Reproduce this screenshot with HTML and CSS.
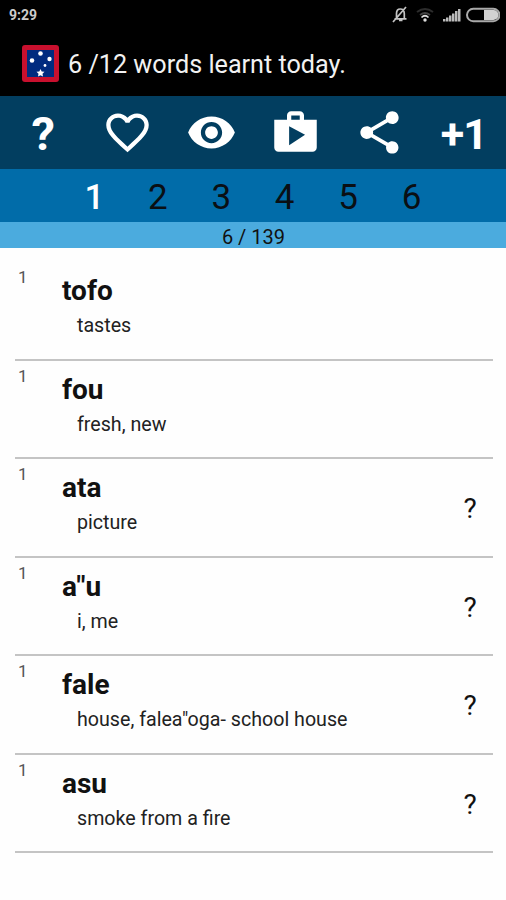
FILE: index.html
```
<!DOCTYPE html>
<html lang="en">

<head>
    <meta charset="UTF-8">
    <title>Samoan Words</title>
    <link rel="stylesheet" href="styles.css">
</head>

<body>

    <div class="status">
        <span class="time">9:29</span>
        <svg class="status-icons" width="108" height="18" viewBox="0 0 108 18">
            <!-- muted bell -->
            <path d="M2.500 12.800h12M4.500 12V7.500Q4.500 3 8.300 3T12.300 7.500V12M7 14.500h3.500M1 16L14 1" fill="none" stroke="#c4c4c4" stroke-width="1.700" />
            <!-- wifi -->
            <path d="M25 6Q33 0 41 6" fill="none" stroke="#2c2c2c" stroke-width="2" />
            <path d="M28 9Q33 5 38 9" fill="none" stroke="#444" stroke-width="1.700" />
            <path d="M29.500 11.500Q33 8 36.500 11.500" fill="none" stroke="#ddd" stroke-width="1.700" />
            <circle cx="33" cy="14" r="1.700" fill="#ddd" />
            <!-- signal -->
            <path d="M51 13h2.500v2.500H51zM54 11.500h2.500v4H54zM57 9.500h2.500v6H57zM60 7.500h2.500v8H60zM63 5h2.500v10.500H63zM66 3h2.500v12.500H66z" fill="#bbb" />
            <!-- battery -->
            <rect x="75" y="2.800" width="32.500" height="12.400" rx="6.200" fill="#000" stroke="#aaa" stroke-width="2" />
            <path d="M92 4h9.500a5 5 0 0 1 0 10H92z" fill="#d2d2d2" />
        </svg>
    </div>

    <header>
        <svg class="logo" width="37" height="37" viewBox="0 0 37 37">
            <rect width="37" height="37" rx="3" fill="#c8102e" />
            <rect x="5" y="5" width="27" height="27" fill="#002b7f" />
            <g fill="#fff">
                <circle cx="18.500" cy="8.500" r="2.300" />
                <circle cx="10" cy="15.500" r="2.300" />
                <circle cx="27.500" cy="14" r="2.200" />
                <circle cx="23" cy="20.500" r="1.400" />
                <path d="M18.500 24l1.200 2.500 2.800.2-2 2 .5 2.800-2.500-1.300-2.500 1.300.5-2.800-2-2 2.800-.2z" />
            </g>
        </svg>
        <h1>6 /12 words learnt today.</h1>
    </header>

    <nav class="toolbar">
        <span class="help">?</span>
        <svg viewBox="0 0 24 24"><path d="M16.500 3c-1.740 0-3.410.81-4.500 2.090C10.910 3.810 9.240 3 7.500 3 4.420 3 2 5.420 2 8.500c0 3.780 3.400 6.860 8.550 11.540L12 21.350l1.450-1.320C18.600 15.360 22 12.280 22 8.500 22 5.420 19.580 3 16.500 3zm-4.400 15.550l-.1.1-.1-.1C7.140 14.240 4 11.390 4 8.500 4 6.500 5.500 5 7.500 5c1.540 0 3.040.99 3.570 2.360h1.870C13.460 5.990 14.960 5 16.500 5c2 0 3.500 1.500 3.500 3.500 0 2.890-3.140 5.740-7.900 10.050z" /></svg>
        <svg viewBox="0 0 24 24"><path d="M12 4.500C7 4.500 2.730 7.610 1 12c1.730 4.390 6 7.500 11 7.500s9.270-3.110 11-7.500c-1.730-4.390-6-7.500-11-7.500zM12 17c-2.760 0-5-2.240-5-5s2.240-5 5-5 5 2.240 5 5-2.240 5-5 5zm0-8c-1.660 0-3 1.340-3 3s1.340 3 3 3 3-1.340 3-3-1.340-3-3-3z" /></svg>
        <svg viewBox="0 0 24 24"><path d="M16 6V4c0-1.110-.89-2-2-2h-4c-1.110 0-2 .89-2 2v2H2v13c0 1.110.89 2 2 2h16c1.110 0 2-.89 2-2V6h-6zm-6-2h4v2h-4V4zM9 18V9l7.500 4L9 18z" /></svg>
        <svg viewBox="0 0 24 24"><path d="M18 16.080c-.76 0-1.440.3-1.960.77L8.910 12.700c.05-.23.09-.46.09-.7s-.04-.47-.09-.7l7.050-4.110c.54.5 1.250.81 2.040.81 1.660 0 3-1.340 3-3s-1.340-3-3-3-3 1.340-3 3c0 .24.04.47.09.7L8.040 9.810C7.500 9.310 6.790 9 6 9c-1.660 0-3 1.340-3 3s1.340 3 3 3c.79 0 1.500-.31 2.040-.81l7.120 4.160c-.05.21-.08.43-.08.65 0 1.610 1.310 2.920 2.920 2.920s2.920-1.310 2.920-2.920-1.310-2.920-2.920-2.920z" /></svg>
        <span class="plus">+1</span>
    </nav>

    <nav class="levels">
        <span class="active">1</span>
        <span>2</span>
        <span>3</span>
        <span>4</span>
        <span>5</span>
        <span>6</span>
    </nav>

    <div class="progress">6 / 139</div>

    <ul class="words">
        <li>
            <span class="level">1</span>
            <div class="entry"><h2>tofo</h2><p>tastes</p></div>
        </li>
        <li>
            <span class="level">1</span>
            <div class="entry"><h2>fou</h2><p>fresh, new</p></div>
        </li>
        <li>
            <span class="level">1</span>
            <div class="entry"><h2>ata</h2><p>picture</p></div>
            <span class="unknown">?</span>
        </li>
        <li>
            <span class="level">1</span>
            <div class="entry"><h2>a"u</h2><p>i, me</p></div>
            <span class="unknown">?</span>
        </li>
        <li>
            <span class="level">1</span>
            <div class="entry"><h2>fale</h2><p>house, falea"oga- school house</p></div>
            <span class="unknown">?</span>
        </li>
        <li>
            <span class="level">1</span>
            <div class="entry"><h2>asu</h2><p>smoke from a fire</p></div>
            <span class="unknown">?</span>
        </li>
    </ul>

</body>

</html>
```
FILE: styles.css
```
* {
    box-sizing: border-box;
}

body {
    margin: 0;
    font-family: Roboto, sans-serif;
    background-color: #fefefe;
    color: #111;
}

.status {
    display: flex;
    justify-content: space-between;
    align-items: center;
    height: 30px;
    padding: 0 6px 0 9px;
    background-color: #000;
    color: #ccc;
}

.time {
    font-size: 14px;
    font-weight: bold;
}

header {
    display: flex;
    align-items: center;
    gap: 9px;
    height: 66px;
    padding: 0 22px;
    background-color: #000;
    color: #f2f2f2;
}

h1 {
    margin: 2px 0 0;
    font-size: 25.200px;
    font-weight: normal;
}

.toolbar {
    display: grid;
    grid-template-columns: repeat(6, 1fr);
    align-items: center;
    justify-items: center;
    height: 73px;
    padding-left: 1px;
    background-color: #023e60;
    color: #fff;
    font-weight: bold;
}

.toolbar svg {
    width: 51px;
    height: 51px;
    fill: #fff;
}

.help {
    padding-top: 2px;
    font-size: 47px;
}

.plus {
    padding-top: 3px;
    font-size: 43px;
    letter-spacing: -1px;
}

.levels {
    display: grid;
    grid-template-columns: repeat(6, 63.400px);
    justify-content: center;
    height: 53px;
    background-color: #016ca9;
    color: #0a0f14;
    font-size: 35px;
    line-height: 58px;
    text-align: center;
}

.levels .active {
    color: #fff;
    font-weight: 500;
}

.progress {
    height: 26px;
    padding-left: 1px;
    background-color: #4babde;
    font-size: 20px;
    line-height: 31px;
    text-align: center;
}

.words {
    margin: 0;
    padding: 14px 13px 0 15px;
    list-style: none;
}

.words li {
    display: flex;
    height: 98.500px;
    border-bottom: 2px solid #c4c4c4;
}

.level {
    width: 47px;
    padding: 5px 0 0 3px;
    color: #555;
    font-size: 17px;
}

.entry {
    flex: 1;
}

h2 {
    margin: 12px 0 0;
    font-size: 28px;
    line-height: 34px;
}

p {
    margin: 5px 0 0 15px;
    color: #222;
    font-size: 19.650px;
    line-height: 26px;
}

.unknown {
    width: 46px;
    padding-top: 33px;
    font-size: 28px;
    text-align: center;
}
```
